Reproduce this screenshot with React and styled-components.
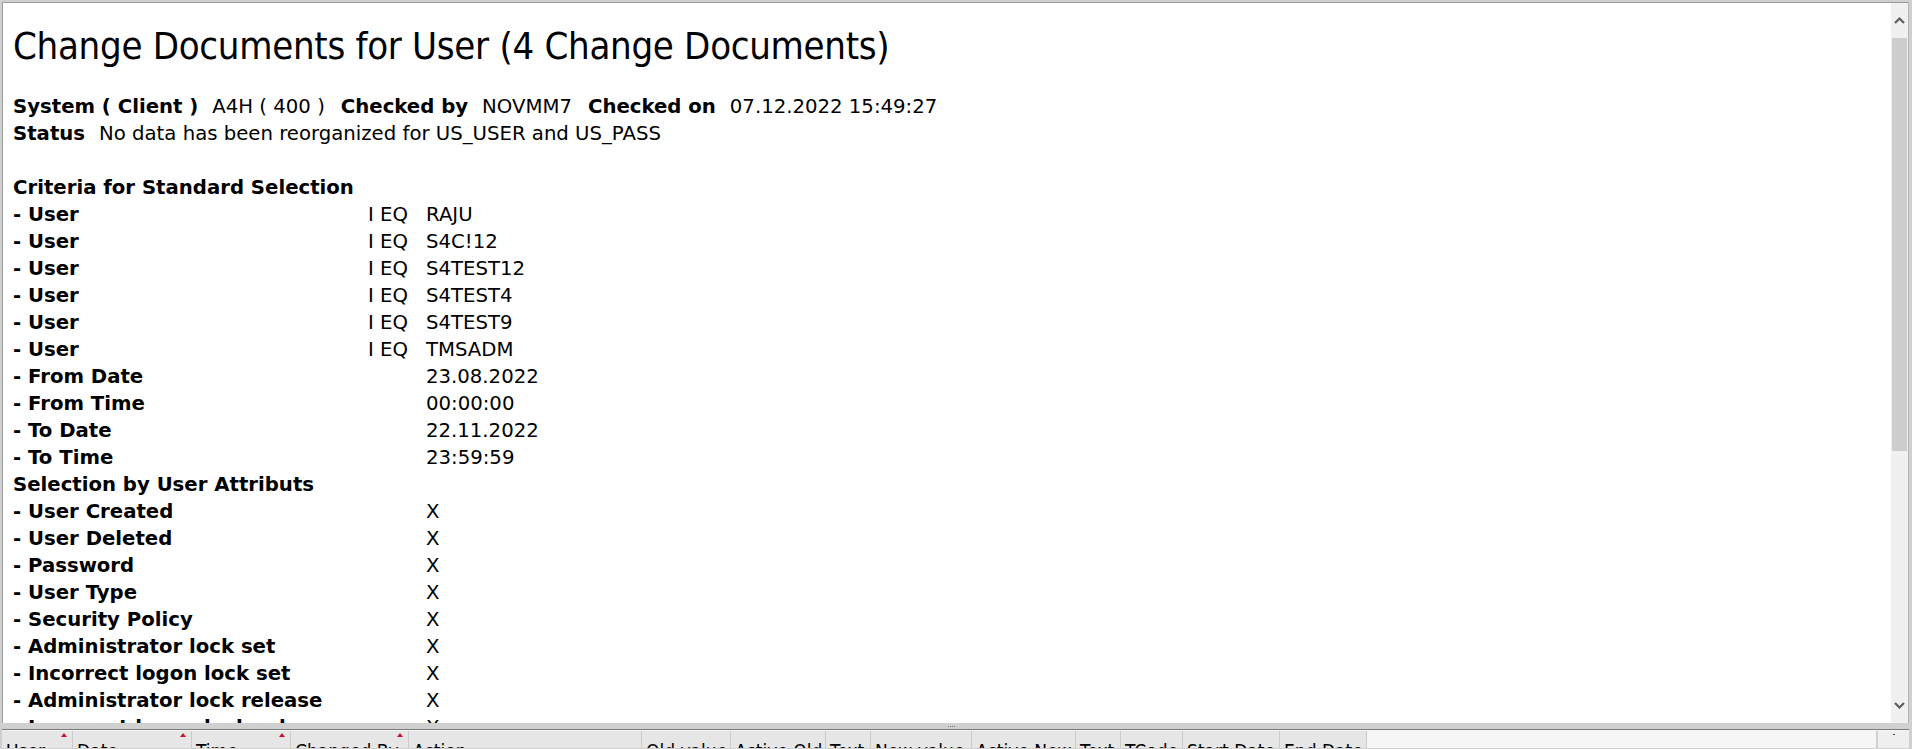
import React from "react";
import styled, { createGlobalStyle } from "styled-components";

const GlobalStyle = createGlobalStyle`
  html, body {
    margin: 0;
    padding: 0;
    overflow: hidden;
    background: #d0d0d0;
  }
`;

const FONT = `Tahoma, "DejaVu Sans", sans-serif`;
const NARROW = `Tahoma, "DejaVu Sans Condensed", "DejaVu Sans", sans-serif`;

const Window = styled.div`
  width: 1912px;
  height: 749px;
  box-sizing: border-box;
  display: flex;
  flex-direction: column;
  background: #d0d0d0;
  padding: 2px 3px 0 2px;
  font-family: ${FONT};
  color: #000;
  overflow: hidden;
`;

const TopPane = styled.div`
  display: flex;
  height: 720px;
  flex-shrink: 0;
  border-top: 1px solid #9a9a9a;
  border-left: 1px solid #9a9a9a;
  border-right: 1px solid #b4b4b4;
`;

const Report = styled.div`
  flex: 1;
  background: #fff;
  overflow: hidden;
  padding: 20px 0 0 10px;
`;

const Title = styled.h1`
  margin: 0;
  font-family: ${NARROW};
  font-weight: normal;
  font-size: 38px;
  line-height: 46px;
  letter-spacing: -0.3px;
  white-space: nowrap;
`;

const Lines = styled.div`
  margin-top: 24px;
  font-size: 19.7px;
  line-height: 27px;
`;

const Line = styled.div`
  display: flex;
  white-space: nowrap;
  height: 27px;
`;

const Key = styled.span`
  font-weight: bold;
  margin-right: 14px;
`;

const Val = styled.span`
  margin-right: 16px;
`;

const Blank = styled.div`
  height: 27px;
`;

const Heading = styled.div`
  font-weight: bold;
  white-space: nowrap;
  height: 27px;
`;

const Row = styled.div`
  display: grid;
  grid-template-columns: 355px 58px auto;
  white-space: nowrap;
  height: 27px;
`;

const Label = styled.span`
  font-weight: bold;
`;

const Scrollbar = styled.div`
  width: 17px;
  background: #f0f0f0;
  display: flex;
  flex-direction: column;
  align-items: center;
`;

const Arrow = styled.div`
  height: ${(p) => p.h}px;
  width: 17px;
  display: flex;
  align-items: center;
  justify-content: center;
`;

const Thumb = styled.div`
  width: 15px;
  height: 413px;
  background: #cdcdcd;
`;

const Track = styled.div`
  flex: 1;
`;

const Splitter = styled.div`
  height: 6px;
  flex-shrink: 0;
  border-bottom: 1px solid #7c7c7c;
  display: flex;
  justify-content: center;
  align-items: center;
`;

const Grip = styled.div`
  width: 8px;
  height: 1px;
  margin-left: -8px;
  background: repeating-linear-gradient(90deg, #777 0 1px, transparent 1px 2px);
`;

const HeaderBar = styled.div`
  height: 17px;
  flex-shrink: 0;
  display: flex;
  border-top: 1px solid #f4f4f4;
`;

const HeadCell = styled.div`
  position: relative;
  width: ${(p) => p.w}px;
  box-sizing: border-box;
  flex-shrink: 0;
  background: #e6e6e6;
  border-right: 1px solid #cbcbcb;
  padding: 9px 0 0 4px;
  font-family: ${NARROW};
  font-size: 19px;
  line-height: 22px;
  white-space: nowrap;
  overflow: hidden;
`;

const SortMark = styled.span`
  position: absolute;
  top: 2px;
  right: 5px;
  width: 0;
  height: 0;
  border-left: 3px solid transparent;
  border-right: 3px solid transparent;
  border-bottom: 4px solid #c8102e;
`;

const HeadFiller = styled.div`
  flex: 1;
  background: #f6f6f6;
`;

const Corner = styled.div`
  width: 31px;
  margin-left: 2px;
  background: #efefef;
  display: flex;
  justify-content: center;
  align-items: flex-start;
  padding-top: 3px;
  box-sizing: border-box;
  &::after {
    content: "";
    width: 2px;
    height: 1px;
    background: #444;
  }
`;

const Chevron = ({ up }) => (
  <svg width="11" height="7" viewBox="0 0 11 7">
    <polyline
      points={up ? "1,6 5.5,1.5 10,6" : "1,1 5.5,5.5 10,1"}
      fill="none"
      stroke="#5f5f5f"
      strokeWidth="2.2"
    />
  </svg>
);

const users = ["RAJU", "S4C!12", "S4TEST12", "S4TEST4", "S4TEST9", "TMSADM"];

const ranges = [
  ["- From Date", "23.08.2022"],
  ["- From Time", "00:00:00"],
  ["- To Date", "22.11.2022"],
  ["- To Time", "23:59:59"],
];

const attributes = [
  "- User Created",
  "- User Deleted",
  "- Password",
  "- User Type",
  "- Security Policy",
  "- Administrator lock set",
  "- Incorrect logon lock set",
  "- Administrator lock release",
  "- Incorrect logon lock release",
  "- Roles",
  "- Profiles",
];

const columns = [
  { title: "User", w: 71, sorted: true },
  { title: "Date", w: 119, sorted: true },
  { title: "Time", w: 99, sorted: true },
  { title: "Changed By", w: 118, sorted: true },
  { title: "Action", w: 233 },
  { title: "Old value", w: 89 },
  { title: "Active Old", w: 95 },
  { title: "Text", w: 45 },
  { title: "New value", w: 101 },
  { title: "Active New", w: 104 },
  { title: "Text", w: 45 },
  { title: "TCode", w: 62 },
  { title: "Start Date", w: 97 },
  { title: "End Date", w: 87 },
];

export default function App() {
  return (
    <>
      <GlobalStyle />
      <Window>
        <TopPane>
          <Report>
            <Title>Change Documents for User (4 Change Documents)</Title>
            <Lines>
              <Line>
                <Key>System ( Client )</Key>
                <Val>A4H ( 400 )</Val>
                <Key>Checked by</Key>
                <Val>NOVMM7</Val>
                <Key>Checked on</Key>
                <Val>07.12.2022 15:49:27</Val>
              </Line>
              <Line>
                <Key>Status</Key>
                <Val>No data has been reorganized for US_USER and US_PASS</Val>
              </Line>
              <Blank />
              <Heading>Criteria for Standard Selection</Heading>
              {users.map((u) => (
                <Row key={u}>
                  <Label>- User</Label>
                  <span>I EQ</span>
                  <span>{u}</span>
                </Row>
              ))}
              {ranges.map(([l, v]) => (
                <Row key={l}>
                  <Label>{l}</Label>
                  <span />
                  <span>{v}</span>
                </Row>
              ))}
              <Heading>Selection by User Attributs</Heading>
              {attributes.map((a) => (
                <Row key={a}>
                  <Label>{a}</Label>
                  <span />
                  <span>X</span>
                </Row>
              ))}
            </Lines>
          </Report>
          <Scrollbar>
            <Arrow h={35}>
              <Chevron up />
            </Arrow>
            <Thumb />
            <Track />
            <Arrow h={36}>
              <Chevron />
            </Arrow>
          </Scrollbar>
        </TopPane>
        <Splitter>
          <Grip />
        </Splitter>
        <HeaderBar>
          {columns.map((c, i) => (
            <HeadCell key={i} w={c.w}>
              {c.title}
              {c.sorted && <SortMark />}
            </HeadCell>
          ))}
          <HeadFiller />
          <Corner />
        </HeaderBar>
      </Window>
    </>
  );
}
